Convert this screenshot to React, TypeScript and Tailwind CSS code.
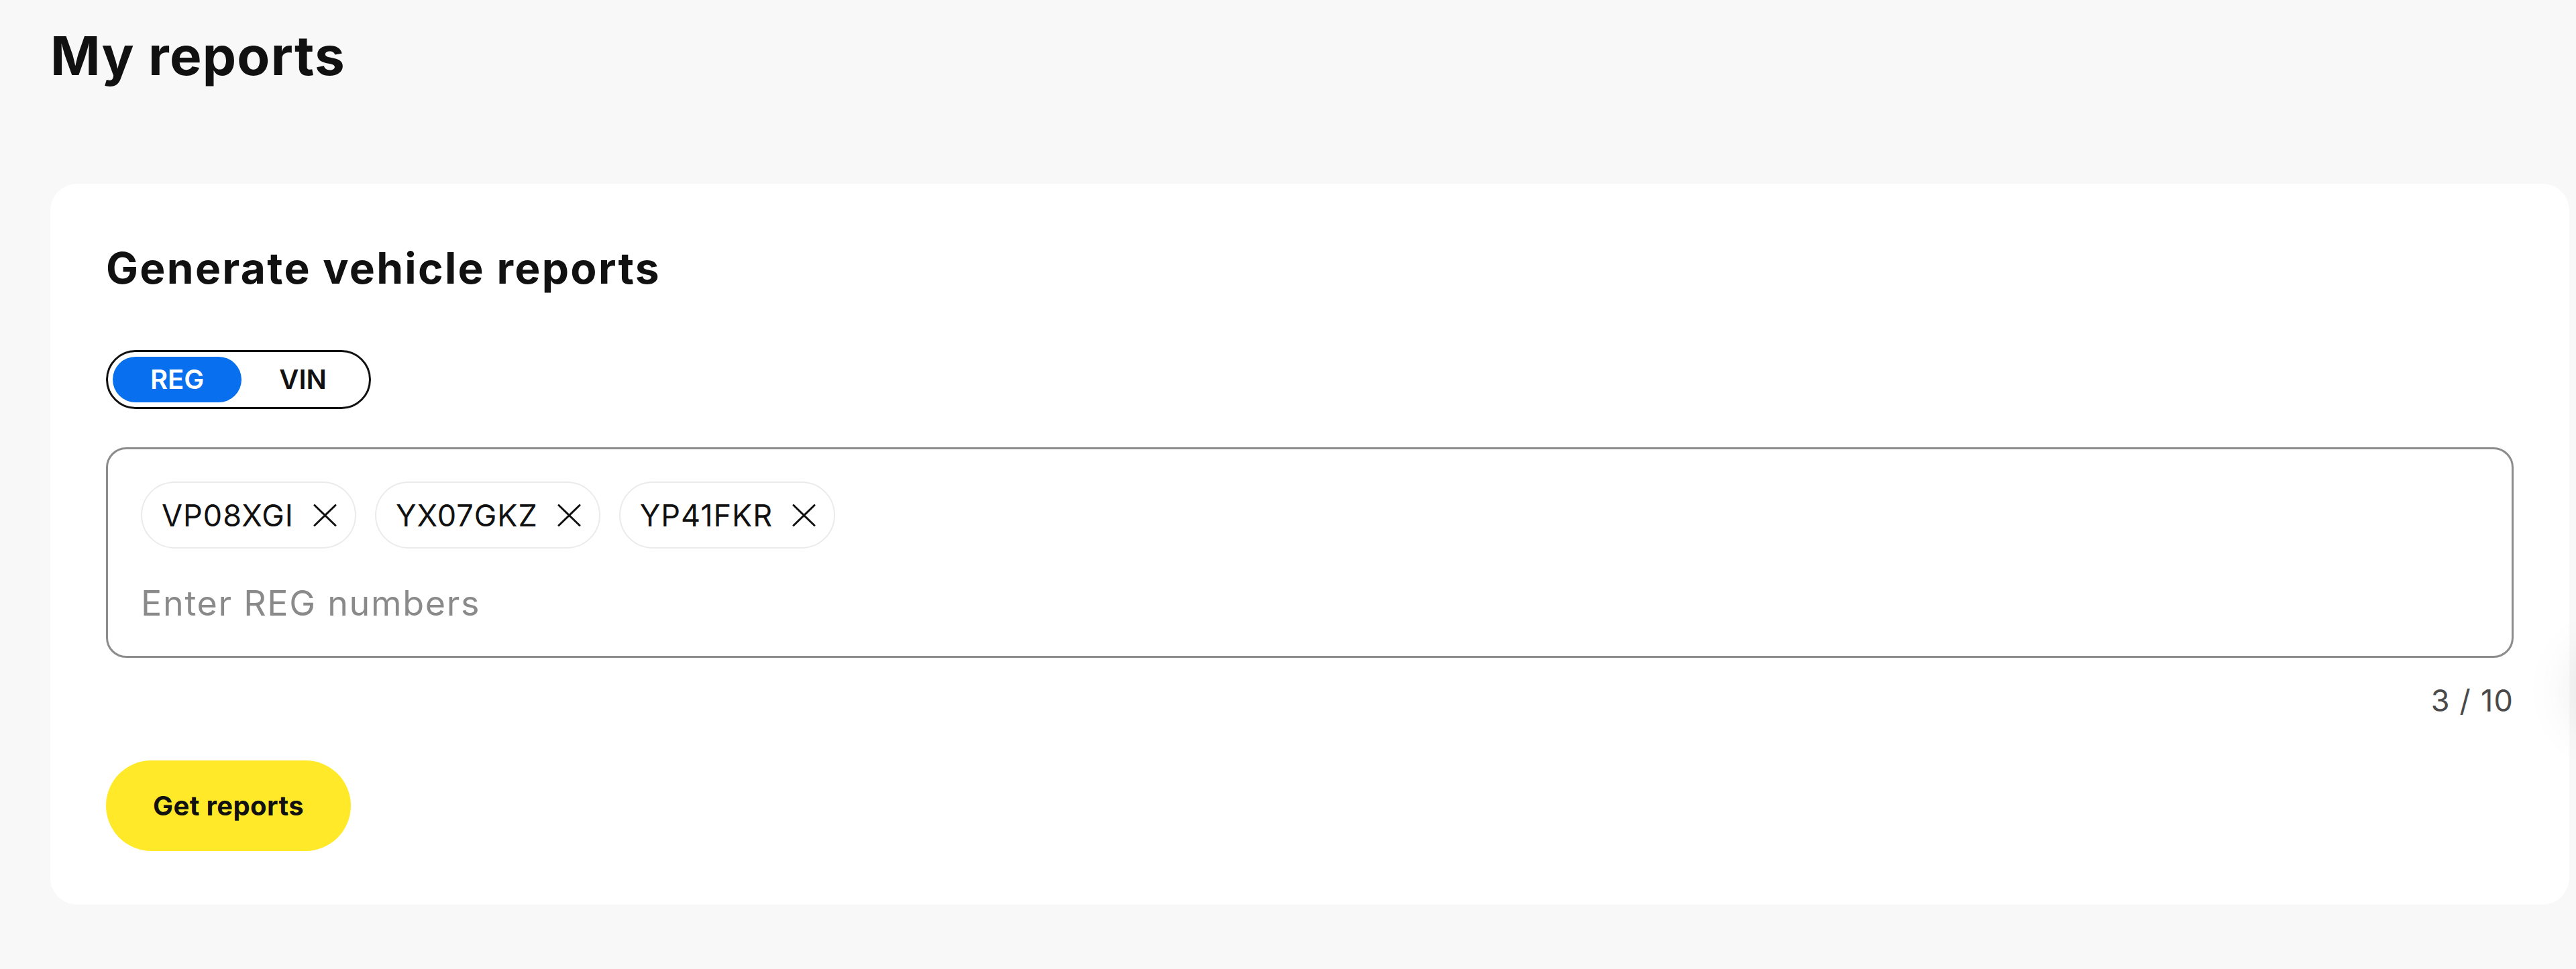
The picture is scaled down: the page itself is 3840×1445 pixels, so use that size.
import { useState } from "react";

const initialRegs = ["VP08XGI", "YX07GKZ", "YP41FKR"];

function CloseIcon() {
  return (
    <svg width="35" height="33" viewBox="0 0 35 33" fill="none" aria-hidden="true">
      <path d="M2 1.5 33 31.5M33 1.5 2 31.5" stroke="#111" strokeWidth="3" strokeLinecap="round" />
    </svg>
  );
}

function Chip({ label, onRemove }: { label: string; onRemove: () => void }) {
  return (
    <div className="flex h-[100px] items-center gap-[29px] rounded-full border-2 border-[#ebebeb] pl-[29px] pr-[27px]">
      <span className="text-[45px] leading-none tracking-[1px] text-[#111]">{label}</span>
      <button onClick={onRemove} className="flex items-center">
        <CloseIcon />
      </button>
    </div>
  );
}

export default function App() {
  const [mode, setMode] = useState<"REG" | "VIN">("REG");
  const [regs, setRegs] = useState(initialRegs);

  return (
    <div
      className="relative min-h-screen overflow-hidden bg-[#f8f8f8] pl-[75px] pr-[10px] pt-[35px] pb-[96px]"
      style={{ fontFamily: "Inter, 'Noto Sans', sans-serif" }}
    >
      <h1 className="text-[80px] font-bold leading-[96px] tracking-[1.2px] text-[#111]">My reports</h1>

      <div className="mt-[143px] rounded-[40px] bg-white px-[83px] pt-[89px] pb-[80px]">
        <h2 className="text-[64px] font-bold leading-[73px] tracking-[2.3px] text-[#111]">
          Generate vehicle reports
        </h2>

        <div className="mt-[86px] inline-flex h-[88px] items-center rounded-full border-[3px] border-[#111] p-[7px]">
          {(["REG", "VIN"] as const).map((m) => (
            <button
              key={m}
              onClick={() => setMode(m)}
              className={
                mode === m
                  ? "flex h-[68px] items-center rounded-full bg-[#0870ee] px-[56px] text-[40px] font-semibold text-white"
                  : "flex h-[68px] items-center rounded-full px-[56px] text-[40px] font-semibold text-[#111]"
              }
            >
              {m}
            </button>
          ))}
        </div>

        <div className="mt-[57px] flex h-[314px] flex-col rounded-[30px] border-[3px] border-[#8c8c8c] px-[49px] pt-[48px]">
          <div className="flex flex-wrap gap-[28px]">
            {regs.map((r) => (
              <Chip key={r} label={r} onRemove={() => setRegs(regs.filter((x) => x !== r))} />
            ))}
          </div>
          <input
            className="mt-[44px] h-[75px] w-full bg-transparent text-[52px] leading-[75px] tracking-[1.7px] text-[#111] outline-none placeholder:text-[#8a8a8a]"
            placeholder={`Enter ${mode} numbers`}
          />
        </div>

        <div className="mt-[30px] text-right text-[45px] leading-[67px] tracking-[1.2px] text-[#4a4a4a]">
          {regs.length} / 10
        </div>

        <button className="mt-[56px] flex h-[135px] items-center rounded-full bg-[#ffe928] px-[70px] text-[40px] font-bold tracking-[0.4px] text-[#111]">
          Get reports
        </button>
      </div>

      <div className="absolute right-[-110px] top-[975px] h-[110px] w-[110px] rounded-full shadow-[0_0_80px_6px_rgba(0,0,0,0.09)]" />
    </div>
  );
}
